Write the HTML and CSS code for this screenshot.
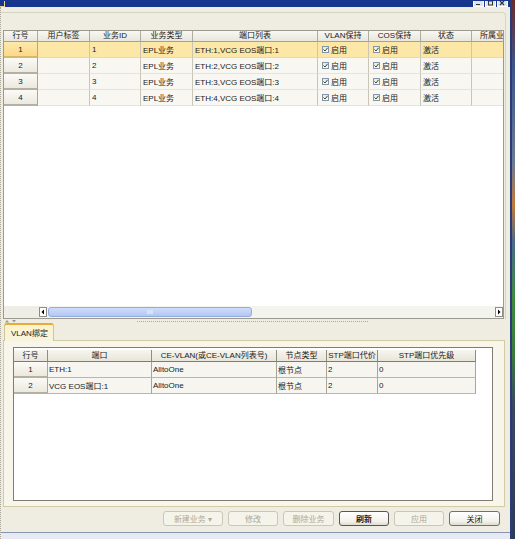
FILE: index.html
```html
<!DOCTYPE html>
<html>
<head>
<meta charset="utf-8">
<link rel="stylesheet" href="styles.css">
</head>
<body>
<div class="screen">
  <div class="window">
    <div class="titlebar">
      <span class="tb-icon"></span>
      <div class="tb-controls">
        <span class="tb-btn"><svg width="9" height="5" viewBox="0 0 9 5"><rect x="2" y="3" width="4" height="1" fill="#333"/></svg></span>
        <span class="tb-btn"><svg width="9" height="5" viewBox="0 0 9 5"><rect x="2.5" y="0" width="4" height="4" fill="none" stroke="#333" stroke-width="1"/></svg></span>
        <span class="tb-btn"><svg width="9" height="5" viewBox="0 0 9 5"><path d="M2 0 L6 4 M6 0 L2 4" stroke="#333" stroke-width="1.2"/></svg></span>
      </div>
    </div>
    <div class="client">
      <div class="upper">
        <div class="frame">
          <div class="row head">
            <div class="hc">行号</div><div class="hc">用户标签</div><div class="hc">业务ID</div><div class="hc">业务类型</div><div class="hc">端口列表</div><div class="hc">VLAN保持</div><div class="hc">COS保持</div><div class="hc">状态</div><div class="hc hc-last">所属业</div>
          </div>
          <div class="row body sel">
            <div class="rh">1</div><div class="c"></div><div class="c">1</div><div class="c">EPL业务</div><div class="c">ETH:1,VCG EOS端口:1</div><div class="c ck"><span class="cb"><svg width="5" height="5" viewBox="0 0 5 5"><path d="M0.5 2.5 L2 4 L4.6 0.8" fill="none" stroke="#2f4a2f" stroke-width="1"/></svg></span>启用</div><div class="c ck"><span class="cb"><svg width="5" height="5" viewBox="0 0 5 5"><path d="M0.5 2.5 L2 4 L4.6 0.8" fill="none" stroke="#2f4a2f" stroke-width="1"/></svg></span>启用</div><div class="c">激活</div><div class="c"></div>
          </div>
          <div class="row body">
            <div class="rh">2</div><div class="c"></div><div class="c">2</div><div class="c">EPL业务</div><div class="c">ETH:2,VCG EOS端口:2</div><div class="c ck"><span class="cb"><svg width="5" height="5" viewBox="0 0 5 5"><path d="M0.5 2.5 L2 4 L4.6 0.8" fill="none" stroke="#2f4a2f" stroke-width="1"/></svg></span>启用</div><div class="c ck"><span class="cb"><svg width="5" height="5" viewBox="0 0 5 5"><path d="M0.5 2.5 L2 4 L4.6 0.8" fill="none" stroke="#2f4a2f" stroke-width="1"/></svg></span>启用</div><div class="c">激活</div><div class="c"></div>
          </div>
          <div class="row body">
            <div class="rh">3</div><div class="c"></div><div class="c">3</div><div class="c">EPL业务</div><div class="c">ETH:3,VCG EOS端口:3</div><div class="c ck"><span class="cb"><svg width="5" height="5" viewBox="0 0 5 5"><path d="M0.5 2.5 L2 4 L4.6 0.8" fill="none" stroke="#2f4a2f" stroke-width="1"/></svg></span>启用</div><div class="c ck"><span class="cb"><svg width="5" height="5" viewBox="0 0 5 5"><path d="M0.5 2.5 L2 4 L4.6 0.8" fill="none" stroke="#2f4a2f" stroke-width="1"/></svg></span>启用</div><div class="c">激活</div><div class="c"></div>
          </div>
          <div class="row body">
            <div class="rh">4</div><div class="c"></div><div class="c">4</div><div class="c">EPL业务</div><div class="c">ETH:4,VCG EOS端口:4</div><div class="c ck"><span class="cb"><svg width="5" height="5" viewBox="0 0 5 5"><path d="M0.5 2.5 L2 4 L4.6 0.8" fill="none" stroke="#2f4a2f" stroke-width="1"/></svg></span>启用</div><div class="c ck"><span class="cb"><svg width="5" height="5" viewBox="0 0 5 5"><path d="M0.5 2.5 L2 4 L4.6 0.8" fill="none" stroke="#2f4a2f" stroke-width="1"/></svg></span>启用</div><div class="c">激活</div><div class="c"></div>
          </div>
          <div class="fill"></div>
          <div class="hscroll">
            <div class="hs-left"></div>
            <div class="hs-arrow"><svg width="6" height="8" viewBox="0 0 6 8"><path d="M4 1.5 L1.5 4 L4 6.5 Z" fill="#000"/></svg></div>
            <div class="hs-thumb"><svg width="6" height="6" viewBox="0 0 6 6"><path d="M1 1 V5 M3 1 V5 M5 1 V5" stroke="#eef3ff" stroke-width="1"/></svg></div>
            <div class="hs-track"></div>
            <div class="hs-arrow"><svg width="6" height="8" viewBox="0 0 6 8"><path d="M2 1.5 L4.5 4 L2 6.5 Z" fill="#000"/></svg></div>
          </div>
        </div>
      </div>
      <div class="splitter">
        <svg class="sp-arrows" width="12" height="4" viewBox="0 0 12 4"><path d="M1 3.5 L3 1 L5 3.5 Z" fill="#9a988c"/><path d="M8 1 L12 1 L10 3.5 Z" fill="#9a988c"/></svg>
        <span class="sp-dots"></span>
      </div>
      <div class="tabs">
        <div class="tab">VLAN绑定</div>
      </div>
      <div class="tabpanel">
        <div class="inner">
          <div class="srow shead">
            <div class="hc">行号</div><div class="hc">端口</div><div class="hc">CE-VLAN(或CE-VLAN列表号)</div><div class="hc">节点类型</div><div class="hc">STP端口代价</div><div class="hc">STP端口优先级</div>
          </div>
          <div class="srow sbody">
            <div class="rh">1</div><div class="c">ETH:1</div><div class="c">AlltoOne</div><div class="c">根节点</div><div class="c">2</div><div class="c">0</div>
          </div>
          <div class="srow sbody">
            <div class="rh">2</div><div class="c">VCG EOS端口:1</div><div class="c">AlltoOne</div><div class="c">根节点</div><div class="c">2</div><div class="c">0</div>
          </div>
        </div>
      </div>
      <div class="buttons">
        <span class="btn dis w60">新建业务 ▾</span>
        <span class="btn dis w50">修改</span>
        <span class="btn dis w51">删除业务</span>
        <span class="btn def w50">刷新</span>
        <span class="btn dis w50">应用</span>
        <span class="btn w51">关闭</span>
      </div>
      <div class="footer"></div>
    </div>
  </div>
  <div class="win-border"></div>
  <div class="desktop"></div>
</div>
</body>
</html>
```
FILE: styles.css
```css
* { box-sizing: border-box; }
html, body { margin: 0; padding: 0; }
body {
  width: 515px;
  height: 539px;
  overflow: hidden;
  font-family: "Liberation Sans", "Noto Sans CJK SC", sans-serif;
  font-size: 8px;
  color: #1a1a1a;
  background: #efede1;
}
.screen { display: flex; width: 515px; height: 539px; }
.window { width: 510px; display: flex; flex-direction: column; background: #efede1; }

/* title bar */
.titlebar {
  height: 7px;
  flex: none;
  background: #16368e;
  display: flex;
  justify-content: space-between;
  align-items: flex-end;
}
.tb-icon {
  width: 5px; height: 6px;
  border-right: 1px solid #e4d7a2;
  border-bottom: 1px solid #e4d7a2;
}
.tb-controls { display: flex; gap: 1px; margin-right: 2px; height: 6px; }
.tb-btn {
  width: 11px; height: 6px;
  background: #dfe3ee;
  border: 1px solid #fff;
  border-top: none;
  display: flex; align-items: flex-end; justify-content: center;
}
.tb-btn svg { display: block; }

/* client */
.client {
  flex: 1;
  display: flex;
  flex-direction: column;
  border-left: 1px dotted #a9a697;
  min-height: 0;
}
.upper {
  margin-top: 5px;
  margin-right: 4px;
  padding: 17px 1px 0 2px;
  border-top: 1px solid #d8d4c4;
  border-right: 1px solid #d8d4c4;
  border-top-right-radius: 4px;
  flex: none;
}
.frame {
  height: 289px;
  border: 1px solid #9c9a8f;
  background: #fff;
  display: flex;
  flex-direction: column;
  overflow: hidden;
}
.row {
  display: grid;
  grid-template-columns: 34px 52px 51px 52px 125px 51px 52px 51px 32px;
  width: 500px;
  flex: none;
}
.hc {
  height: 100%;
  display: flex;
  align-items: center;
  justify-content: center;
  white-space: nowrap;
  overflow: hidden;
  background: linear-gradient(#f8f7f2, #e9e7dc);
  border-right: 1px solid #aeac9f;
  border-bottom: 1px solid #a4a295;
  line-height: 10px;
}
.hc-last { justify-content: flex-start; padding-left: 8px; border-right: none; }
.head { height: 11px; }
.body { height: 16px; }
.c {
  display: flex;
  align-items: center;
  padding-left: 2px;
  white-space: nowrap;
  overflow: hidden;
  background: #f8f7f2;
  border-right: 1px solid #c9c6b8;
  border-bottom: 1px solid #e6e4da;
}
.rh {
  display: flex;
  align-items: center;
  justify-content: center;
  background: linear-gradient(#fbfaf6, #ebe9df);
  border-right: 1px solid #a9a799;
  border-bottom: 2px solid #b3b1a3;
}
.sel .c { background: #fde7a6; border-bottom-color: #f3d995; }
.sel .rh { background: linear-gradient(#fde9ad, #fbd98a); border-bottom-color: #d8b86a; }
.ck { padding-left: 4px; }
.cb {
  width: 7px; height: 7px;
  border: 1px solid #8594a6;
  background: linear-gradient(#e9e9e4, #f8f8f4);
  margin-right: 2px;
  display: flex; align-items: center; justify-content: center;
}
.cb svg { display: block; }
.fill { flex: 1; background: #fff; }

/* horizontal scrollbar */
.hscroll {
  height: 12px;
  flex: none;
  display: flex;
  align-items: center;
  background: #f4f4ef;
}
.hs-left { width: 35px; height: 100%; background: #efeee6; }
.hs-arrow {
  width: 8px; height: 10px;
  border: 1px solid #8d8d88;
  background: #fff;
  display: flex; align-items: center; justify-content: center;
  flex: none;
}
.hs-arrow svg { display: block; }
.hs-thumb {
  width: 204px; height: 10px;
  margin-left: 1px;
  border: 1px solid #93abe0;
  border-radius: 3px;
  background: linear-gradient(#cfddfb, #b2c7f2);
  display: flex; align-items: center; justify-content: center;
  flex: none;
}
.hs-thumb svg { display: block; }
.hs-track { flex: 1; height: 100%; }

/* splitter */
.splitter {
  height: 4px;
  flex: none;
  display: flex;
  align-items: center;
}
.sp-arrows { margin-left: 3px; display: block; }
.sp-dots {
  margin-left: 121px;
  width: 231px;
  border-top: 1px dotted #aeab9c;
}

/* tabs */
.tabs { height: 17px; flex: none; padding-left: 3px; display: flex; position: relative; z-index: 1; }
.tab {
  width: 50px;
  height: 18px;
  padding: 0 0 1px 6px;
  display: flex;
  align-items: center;
  border: 1px solid #cdc598;
  border-top: 2px solid #eaa93c;
  border-bottom: none;
  border-radius: 3px 3px 0 0;
  background: linear-gradient(#fdf3cb, #f8f3df);
  white-space: nowrap;
}
.tabpanel {
  height: 167px;
  flex: none;
  margin-left: 2px;
  width: 502px;
  padding: 6px 11px 5px 9px;
  border: 1px solid #d2cba3;
  background: #f8f6ea;
  display: flex;
}
.inner {
  flex: 1;
  border: 1px solid #7e7d74;
  background: #fff;
  padding-top: 2px;
}
.srow {
  display: grid;
  grid-template-columns: 34px 104px 125px 50px 51px 98px;
  width: 462px;
}
.shead { height: 12px; }
.shead .hc { border-right-color: #8f8d80; border-bottom-color: #7d7c72; background: linear-gradient(#f6f5ef, #e8e6da); }
.sbody { height: 16px; }
.sbody .c { background: #f6f5ef; border-right-color: #a8a698; border-bottom: 1px solid #b9b7aa; padding-left: 1px; }

/* buttons */
.buttons {
  height: 15px;
  flex: none;
  margin-top: 4px;
  padding-right: 10px;
  display: flex;
  justify-content: flex-end;
  gap: 5px;
}
.btn {
  height: 15px;
  border: 1px solid #707070;
  border-radius: 3px;
  background: linear-gradient(#ffffff, #f3f2ec 70%, #dedcd2);
  display: flex;
  align-items: center;
  justify-content: center;
  white-space: nowrap;
}
.btn.dis { border-color: #c9c7b9; background: #f5f4ea; color: #aca999; }
.btn.def { border-color: #555; font-weight: bold; }
.w60 { width: 60px; }
.w50 { width: 50px; }
.w51 { width: 51px; }

.footer {
  flex: 1;
  margin-top: 6px;
  border-top: 1px solid #8993b3;
  background: #e8eaf1;
}

.win-border { width: 2px; background: #2a3c76; }
.desktop {
  width: 3px;
  background: linear-gradient(#6a2a2a 0%, #3d5488 12%, #6a7a98 30%, #c07a3a 38%, #4a6a8a 45%, #3f8a3f 55%, #3a7a3a 66%, #3a4664 75%, #2b3a5c 100%);
}
```
